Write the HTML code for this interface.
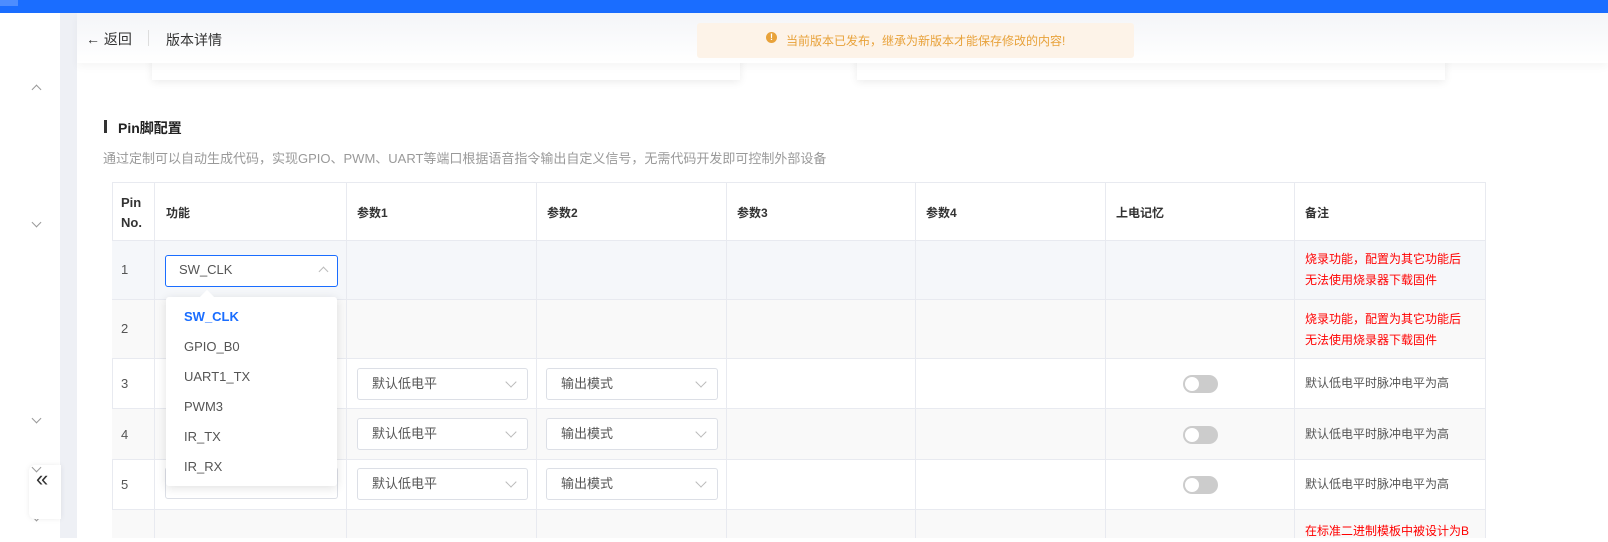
<!DOCTYPE html>
<html><head><meta charset="utf-8"><style>
*{box-sizing:border-box;margin:0;padding:0}
body{width:1608px;height:538px;overflow:hidden;background:#fff;font-family:"Liberation Sans","Noto Sans CJK SC",sans-serif;position:relative;font-size:13px;color:#333}
.abs{position:absolute}
.chev{position:absolute;width:7px;height:7px;border-left:1px solid #999;border-bottom:1px solid #999}
.sel{position:absolute;height:32px;border:1px solid #dcdfe6;border-radius:3px;background:#fff;color:#555;font-size:13px;line-height:30px;padding-left:14px}
.sel.a::after{content:"";position:absolute;right:12px;top:9px;width:7px;height:7px;border-right:1px solid #bbb;border-bottom:1px solid #bbb;transform:rotate(45deg)}
.sw{position:absolute;width:35px;height:18px;border-radius:9px;background:#ccc}
.sw::after{content:"";position:absolute;left:2px;top:2px;width:14px;height:14px;border-radius:50%;background:#fff}
.note{position:absolute;left:1305px;font-size:12px;color:#555;line-height:21px}
.red{color:#f00}
.it{position:absolute;left:184px;font-size:13px;color:#555}
</style></head><body>
<div class="abs" style="left:0;top:0;width:1608px;height:13px;background:#1a6dff"></div>
<div class="abs" style="left:0;top:0;width:18px;height:6px;background:#4d8dff"></div>
<div class="abs" style="left:60px;top:13px;width:17px;height:525px;background:#eef0f5"></div>
<div class="chev" style="left:33px;top:86px;transform:rotate(135deg)"></div>
<div class="chev" style="left:33px;top:219px;transform:rotate(-45deg)"></div>
<div class="chev" style="left:33px;top:415px;transform:rotate(-45deg)"></div>
<div class="chev" style="left:33px;top:513px;transform:rotate(-45deg)"></div>
<div class="abs" style="left:29px;top:465px;width:32px;height:54px;background:#fff;border-radius:6px 0 0 6px;box-shadow:0 0 6px rgba(0,0,0,.08)"></div>
<div class="chev" style="left:33px;top:464px;transform:rotate(-45deg)"></div>
<div class="abs" style="left:36px;top:466px;font-size:22px;line-height:26px;color:#333">«</div>
<div class="abs" style="left:152px;top:40px;width:588px;height:40px;background:#fff;box-shadow:0 2px 8px rgba(0,0,0,.08)"></div>
<div class="abs" style="left:857px;top:40px;width:588px;height:40px;background:#fff;box-shadow:0 2px 8px rgba(0,0,0,.08)"></div>
<div class="abs" style="left:77px;top:13px;width:1531px;height:50px;background:linear-gradient(#f4f5f8,#fff);box-shadow:0 4px 8px rgba(0,0,0,.04)"></div>
<div class="abs" style="left:86px;top:29px;font-size:14px;color:#333">← 返回</div>
<div class="abs" style="left:148px;top:30px;width:1px;height:16px;background:#ddd"></div>
<div class="abs" style="left:166px;top:30px;font-size:14px;color:#333">版本详情</div>
<div class="abs" style="left:697px;top:23px;width:437px;height:35px;background:#fdf3e8;border-radius:3px"></div>
<div class="abs" style="left:766px;top:32px;width:11px;height:11px;border-radius:50%;background:#e8a23a;color:#fff;font-size:9px;text-align:center;line-height:11px;font-weight:bold">!</div>
<div class="abs" style="left:786px;top:32px;font-size:12px;color:#e8a23a">当前版本已发布，继承为新版本才能保存修改的内容!</div>
<div class="abs" style="left:104px;top:120px;width:3px;height:13px;background:#333"></div>
<div class="abs" style="left:118px;top:118px;font-size:14px;font-weight:bold;color:#222">Pin脚配置</div>
<div class="abs" style="left:103px;top:148px;font-size:13px;color:#999">通过定制可以自动生成代码，实现GPIO、PWM、UART等端口根据语音指令输出自定义信号，无需代码开发即可控制外部设备</div>
<div class="abs" style="left:112px;top:182px;width:1374px;height:356px;border-left:1px solid #e8eaf0;border-top:1px solid #e8eaf0"></div>
<div class="abs" style="left:112px;top:241px;width:1374px;height:59px;background:#f5f7fa"></div>
<div class="abs" style="left:112px;top:300px;width:1374px;height:59px;background:#f9f9f9"></div>
<div class="abs" style="left:112px;top:409px;width:1374px;height:51px;background:#f9f9f9"></div>
<div class="abs" style="left:112px;top:510px;width:1374px;height:28px;background:#f9f9f9"></div>
<div id="grid"></div>
<script>
var xs=[112,155,347,537,727,916,1106,1295,1486],ys=[182,241,300,359,409,460,510,560],h='';
for(var i=1;i<xs.length;i++)h+='<div class="abs" style="left:'+(xs[i]-1)+'px;top:182px;width:1px;height:356px;background:#e8eaf0"></div>';
for(var j=1;j<ys.length-1;j++)h+='<div class="abs" style="left:112px;top:'+(ys[j]-1)+'px;width:1374px;height:1px;background:#e8eaf0"></div>';
document.getElementById('grid').innerHTML=h;
</script>
<div class="abs" style="left:121px;top:193px;font-size:13px;font-weight:bold;line-height:20px;color:#333">Pin<br>No.</div>
<div class="abs" style="left:166px;top:204px;font-weight:bold;font-size:12px">功能</div>
<div class="abs" style="left:357px;top:204px;font-weight:bold;font-size:12px">参数1</div>
<div class="abs" style="left:547px;top:204px;font-weight:bold;font-size:12px">参数2</div>
<div class="abs" style="left:737px;top:204px;font-weight:bold;font-size:12px">参数3</div>
<div class="abs" style="left:926px;top:204px;font-weight:bold;font-size:12px">参数4</div>
<div class="abs" style="left:1116px;top:204px;font-weight:bold;font-size:12px">上电记忆</div>
<div class="abs" style="left:1305px;top:204px;font-weight:bold;font-size:12px">备注</div>
<div class="abs" style="left:121px;top:262px;color:#555">1</div>
<div class="abs" style="left:121px;top:321px;color:#555">2</div>
<div class="abs" style="left:121px;top:376px;color:#555">3</div>
<div class="abs" style="left:121px;top:427px;color:#555">4</div>
<div class="abs" style="left:121px;top:477px;color:#555">5</div>
<div class="sel" style="left:165px;top:255px;width:173px;border-color:#1a6dff"></div>
<div class="abs" style="left:179px;top:262px;color:#555;font-size:13px">SW_CLK</div>
<div class="chev" style="left:320px;top:268px;transform:rotate(135deg);border-color:#bbb"></div>
<div class="sel" style="left:165px;top:467px;width:173px;height:32px"></div>
<div class="sel a" style="left:357px;top:368px;width:171px">默认低电平</div>
<div class="sel a" style="left:357px;top:418px;width:171px">默认低电平</div>
<div class="sel a" style="left:357px;top:468px;width:171px">默认低电平</div>
<div class="sel a" style="left:546px;top:368px;width:172px">输出模式</div>
<div class="sel a" style="left:546px;top:418px;width:172px">输出模式</div>
<div class="sel a" style="left:546px;top:468px;width:172px">输出模式</div>
<div class="sw" style="left:1183px;top:375px"></div>
<div class="sw" style="left:1183px;top:426px"></div>
<div class="sw" style="left:1183px;top:476px"></div>
<div class="note red" style="top:249px">烧录功能，配置为其它功能后<br>无法使用烧录器下载固件</div>
<div class="note red" style="top:309px">烧录功能，配置为其它功能后<br>无法使用烧录器下载固件</div>
<div class="note" style="top:373px">默认低电平时脉冲电平为高</div>
<div class="note" style="top:424px">默认低电平时脉冲电平为高</div>
<div class="note" style="top:474px">默认低电平时脉冲电平为高</div>
<div class="note red" style="top:521px">在标准二进制模板中被设计为B</div>
<div class="abs" style="left:166px;top:297px;width:171px;height:189px;background:#fff;border-radius:3px;box-shadow:0 2px 10px rgba(0,0,0,.12)"></div>
<div class="abs" style="left:202px;top:292px;width:10px;height:10px;background:#fff;transform:rotate(45deg)"></div>
<div class="it" style="top:309px;color:#1a6dff;font-weight:bold">SW_CLK</div>
<div class="it" style="top:339px">GPIO_B0</div>
<div class="it" style="top:369px">UART1_TX</div>
<div class="it" style="top:399px">PWM3</div>
<div class="it" style="top:429px">IR_TX</div>
<div class="it" style="top:459px">IR_RX</div>
</body></html>
